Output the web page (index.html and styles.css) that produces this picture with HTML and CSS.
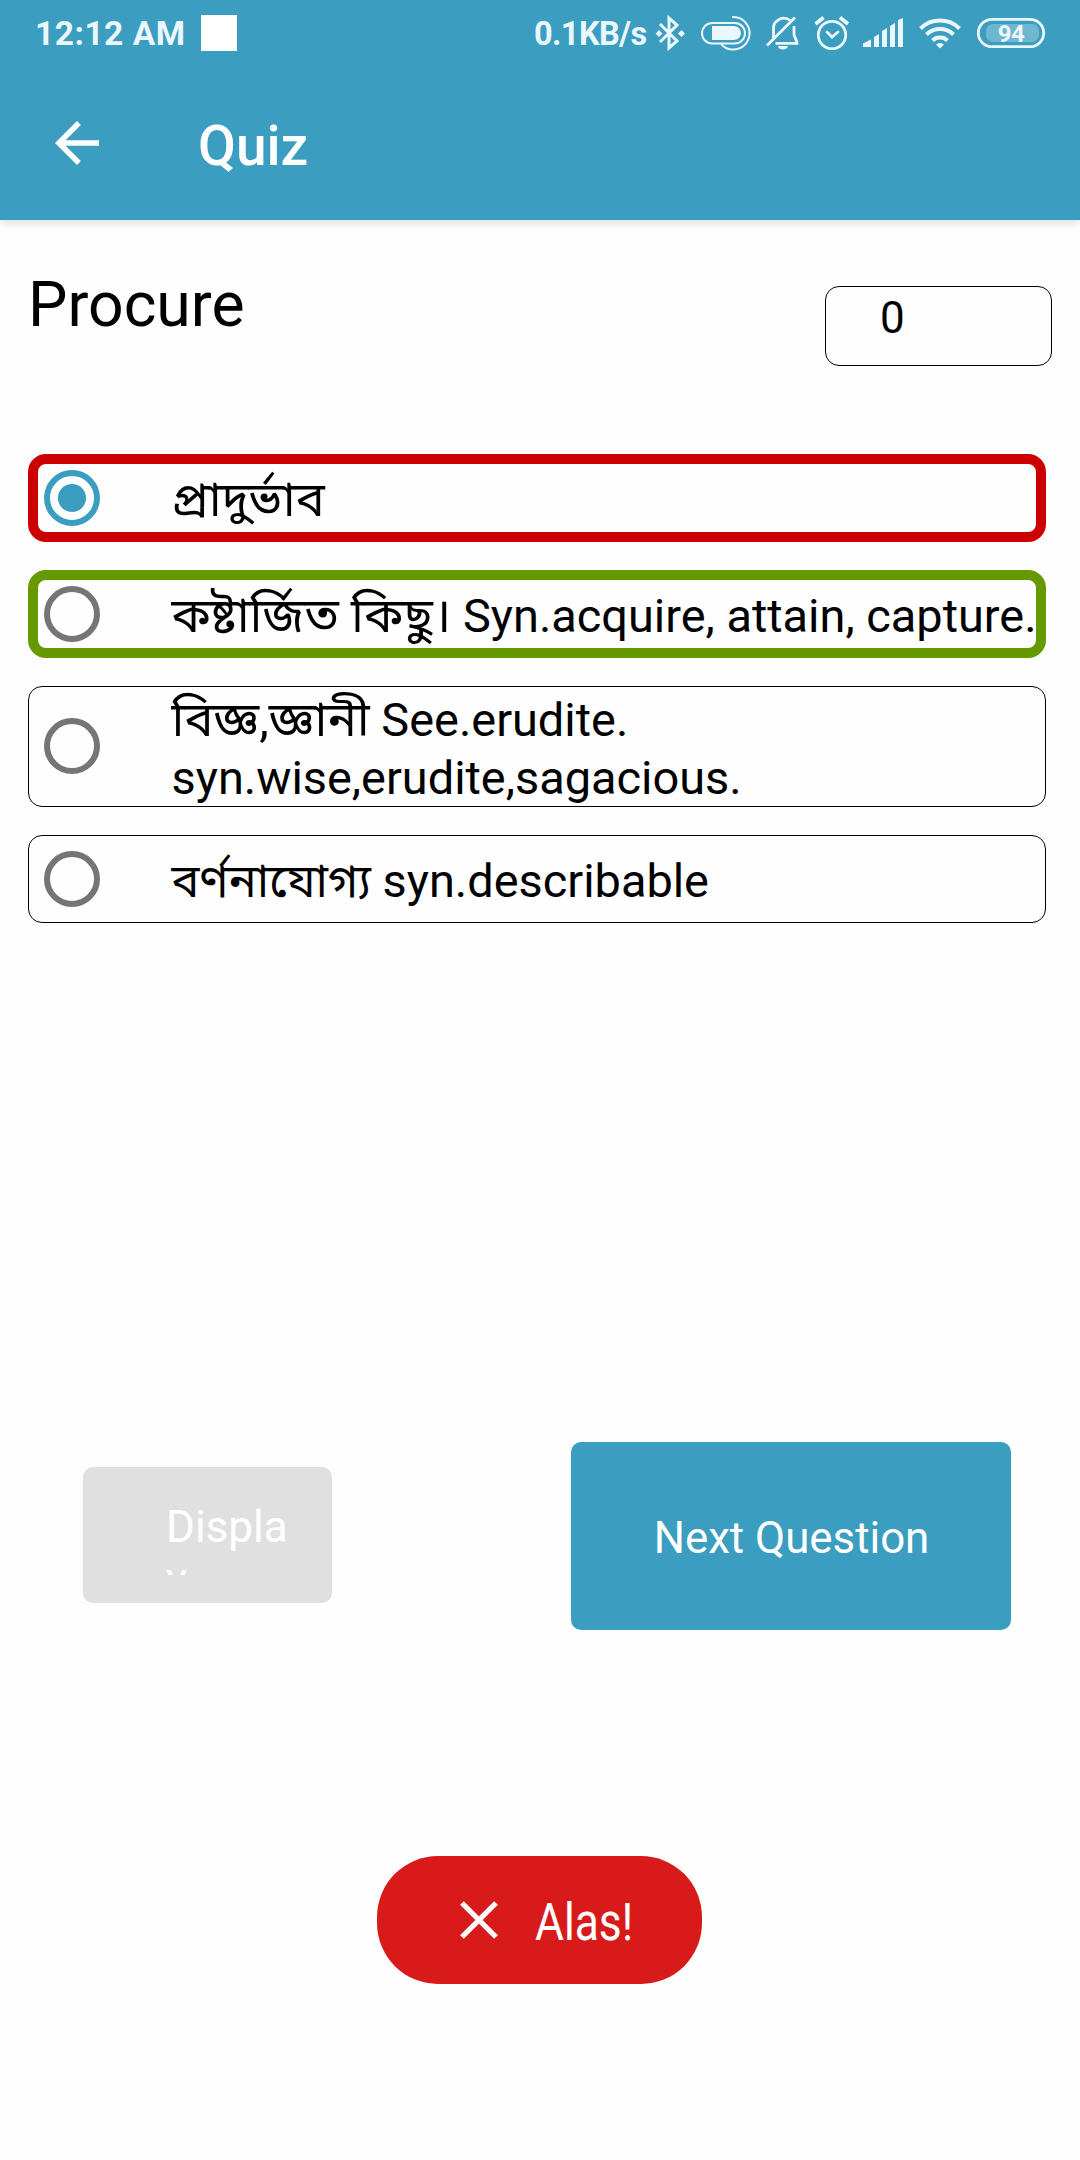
FILE: index.html
```html
<!DOCTYPE html>
<html lang="bn">
<head>
<meta charset="utf-8">
<title>Quiz</title>
<link rel="stylesheet" href="styles.css">
</head>
<body>
<header class="header">
  <div class="status">
    <span class="status-time">12:12 AM</span>
    <span class="status-square"></span>
    <span class="status-speed">0.1KB/s</span>
    <svg class="status-icons" viewBox="650 0 400 66" width="400" height="66" fill="none" stroke="#eaf7fd" stroke-width="3">
      <path d="M660 24 677 41 669 48V18L677 25 660 42"/>
      <path d="m659 30 3.500 3.500-3.500 3.500-3.500-3.500zM681.500 30l3.500 3.500-3.500 3.500-3.500-3.500z" fill="#eaf7fd" stroke="none"/>
      <g stroke-width="2">
        <rect x="702" y="23" width="43" height="20.500" rx="10.250"/>
        <path d="M732 17a16.300 16.300 0 1 1-11 27"/>
        <path d="M712 26h22a7 7 0 0 1 0 14h-22z" fill="#eaf7fd" stroke="none"/>
      </g>
      <g stroke-width="2.800">
        <path d="M773.500 38.500V29a10.500 10 0 0 1 17-8.500M794 26v8c0 4 3 5 3 9.300H775.500M767 45.500 795 17.500"/>
        <path d="M778 46h10a5 3.500 0 0 1-10 0z" fill="#eaf7fd" stroke="none"/>
      </g>
      <circle cx="832" cy="35" r="13.700" stroke-width="2.800"/>
      <path d="m827 32 5 5 6-5" stroke-width="2.800" stroke-linecap="round"/>
      <path d="m815.500 24 8-6.500M848 24l-8-6.500" stroke-width="3.800"/>
      <path d="M863 47v-3.500l8-4V47zM874 47V37l5-3v13zM882 47V31l5-3v19zM890 47V26l5-3v24zM898 47V20l5-2v29z" fill="#eaf7fd" stroke="none"/>
      <g stroke-width="4">
        <path d="M920.500 28.500a28 28 0 0 1 39 0M926.500 34.500a19.500 19.500 0 0 1 27 0M932.500 40.500a11 11 0 0 1 15 0"/>
        <path d="M936 44.500a6 6 0 0 1 8 0l-4 4z" fill="#eaf7fd" stroke="none"/>
      </g>
      <rect x="978.300" y="19.300" width="65.400" height="27.400" rx="13.700" stroke-width="2.800"/>
      <rect x="986" y="24" width="53" height="18" rx="7" fill="#6fb6d0" stroke="none"/>
      <text class="battery-level" x="1011" y="41.700" text-anchor="middle">94</text>
    </svg>
  </div>
  <div class="appbar">
    <svg class="back" viewBox="0 0 24 24" width="66" height="66"><path fill="#fff" d="M20 11H7.830l5.590-5.590L12 4l-8 8 8 8 1.410-1.410L7.830 13H20v-2z"/></svg>
    <h1 class="title">Quiz</h1>
  </div>
</header>
<main class="page">
  <div class="question-row">
    <h2 class="question">Procure</h2>
    <div class="score">0</div>
  </div>
  <div class="options">
    <div class="option option-wrong"><span class="radio radio-on"></span><span class="label"><span class="bangla">প্রাদুর্ভাব</span></span></div>
    <div class="option option-right"><span class="radio"></span><span class="label"><span class="bangla">কষ্টার্জিত কিছু।</span> Syn.acquire, attain, capture.</span></div>
    <div class="option option-tall"><span class="radio"></span><span class="label"><span class="bangla">বিজ্ঞ,জ্ঞানী</span> See.erudite.<br>syn.wise,erudite,sagacious.</span></div>
    <div class="option"><span class="radio"></span><span class="label">বর্ণনাযোগ্য syn.describable</span></div>
  </div>
  <div class="actions">
    <div class="button button-display"><span class="display-text">Display</span></div>
    <div class="button button-next">Next Question</div>
  </div>
  <div class="toast">
    <svg class="cross" viewBox="0 0 38 38" width="38" height="38"><path d="m2 2 34 34M36 2 2 36" stroke="#fff" stroke-width="5.300"/></svg>
    <span class="toast-text">Alas!</span>
  </div>
</main>
</body>
</html>
```
FILE: styles.css
```css
* { box-sizing: border-box; }
body {
  margin: 0;
  width: 1080px;
  height: 2160px;
  overflow: hidden;
  background: #fefefe;
  color: #000;
  font-family: Roboto, "Noto Sans Bengali", "Noto Sans", sans-serif;
}
h1, h2 { margin: 0; font-weight: 400; }

.header {
  height: 220px;
  background: #3b9dbf;
  color: #fff;
  box-shadow: 0 3px 10px rgba(0, 0, 0, .13);
}
.status {
  display: flex;
  height: 66px;
  padding-left: 35px;
  color: #eaf7fd;
  font-size: 33.5px;
  font-weight: 700;
  line-height: 68px;
  white-space: nowrap;
}
.status-time { width: 166px; letter-spacing: .5px; }
.status-square { width: 36px; height: 36px; margin-top: 15px; background: #fff; }
.status-speed { width: 116px; margin-left: 297px; font-size: 32.5px; letter-spacing: -.6px; }
.status-icons { display: block; }
.battery-level { font-size: 24px; font-weight: 700; letter-spacing: -.5px; fill: #eaf7fd; stroke: none; }
.appbar { display: flex; padding: 44px 0 0 44px; }
.title { margin-left: 88px; padding-top: 1px; font-size: 55px; font-weight: 500; line-height: 71px; }

.question-row { display: flex; justify-content: space-between; height: 146px; padding: 47px 28px 0; }
.question { font-size: 62.5px; line-height: 76px; }
.score {
  width: 227px;
  height: 80px;
  margin-top: 19px;
  padding-left: 54px;
  border: 1px solid #000;
  border-radius: 14px;
  font-size: 44px;
  line-height: 63px;
}

.options { display: flex; flex-direction: column; gap: 28px; margin: 88px 34px 0 28px; }
.option {
  display: flex;
  align-items: center;
  height: 88px;
  border: 1px solid #000;
  border-radius: 14px;
  padding-left: 15px;
  font-size: 46.9px;
  line-height: 58px;
  white-space: nowrap;
}
.option-wrong, .option-right { padding-left: 6px; border-width: 10px; border-radius: 18px; }
.option-wrong { border-color: #c00; }
.option-right { border-color: #690; }
.option-tall { height: 121px; }
.radio {
  display: flex;
  flex: none;
  align-items: center;
  justify-content: center;
  width: 56px;
  height: 56px;
  margin-bottom: 1px;
  border: 6px solid #757575;
  border-radius: 50%;
}
.radio-on { border-color: #3b9dbf; }
.radio-on::after { content: ""; width: 28px; height: 28px; border-radius: 50%; background: #3b9dbf; }
.label { margin-left: 71.5px; padding-top: 4px; }
.bangla { font-size: 48.7px; line-height: 1; }

.actions {
  display: flex;
  align-items: center;
  justify-content: space-between;
  margin: 519px 69px 0 83px;
}
.button { color: #fff; border-radius: 10px; font-size: 44px; }
.button-display {
  width: 249px;
  height: 136px;
  margin-bottom: 2px;
  padding: 34px 34px 28px 83px;
  background: #e0e0e0;
}
.display-text { display: block; height: 74px; overflow: hidden; line-height: 52px; word-break: break-all; }
.button-next {
  width: 440px;
  height: 188px;
  padding-left: 1px;
  background: #3b9dbf;
  font-size: 43.8px;
  line-height: 192px;
  text-align: center;
}

.toast {
  display: flex;
  align-items: center;
  width: 325px;
  height: 128px;
  margin: 226px 0 0 377px;
  padding-left: 83px;
  border-radius: 61px;
  background: #d91a1b;
  color: #fff;
}
.toast-text { margin-left: 36.5px; padding-top: 6px; font-size: 51px; line-height: 60px; transform: scaleX(.87); transform-origin: left; }
```
